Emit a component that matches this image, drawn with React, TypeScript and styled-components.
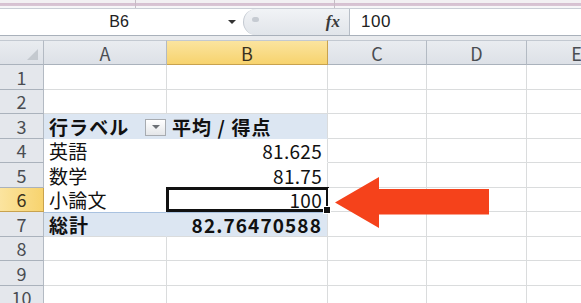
import { FC } from "react";
import styled, { createGlobalStyle, css } from "styled-components";

const CELL_FONT = `"Noto Sans CJK JP", "Noto Sans", sans-serif`;
const COLS = ["A", "B", "C", "D", "E"];
const ROWS = [1, 2, 3, 4, 5, 6, 7, 8, 9, 10];

type Cell = { text: string; bold?: boolean; right?: boolean; filter?: boolean };

// pivot table body, keyed by row number: [A, B]
const pivot: Record<number, [Cell, Cell]> = {
    3: [{ text: "行ラベル", bold: true, filter: true }, { text: "平均 / 得点", bold: true }],
    4: [{ text: "英語" }, { text: "81.625", right: true }],
    5: [{ text: "数学" }, { text: "81.75", right: true }],
    6: [{ text: "小論文" }, { text: "100", right: true }],
    7: [{ text: "総計", bold: true }, { text: "82.76470588", bold: true, right: true }],
};

const GlobalStyle = createGlobalStyle`
    html, body {
        margin: 0;
        padding: 0;
        background: #ffffff;
        overflow: hidden;
    }
`;

const App: FC = () => {
    return <Window>
        <GlobalStyle />
        <RibbonEdge>
            <RibbonGroup $w={135} />
            <RibbonGroup $w={198} />
            <RibbonGroup />
        </RibbonEdge>
        <FormulaBar>
            <NameBox>
                <NameText>B6</NameText>
                <DropArrow />
            </NameBox>
            <Splitter>
                <Knob />
                <Fx>fx</Fx>
            </Splitter>
            <FormulaInput>100</FormulaInput>
        </FormulaBar>
        <BarGap />
        <Sheet>
            <Corner>
                <CornerMark />
            </Corner>
            {COLS.map(c => <ColHead key={c} $active={c === "B"}>{c}</ColHead>)}
            {ROWS.map(r => {
                const p = pivot[r];
                const band = r === 3 || r === 7;
                return [
                    <RowHead key={`h${r}`} $active={r === 6}>{r}</RowHead>,
                    ...COLS.map((c, i) => {
                        const cell = p && i < 2 ? p[i] : undefined;
                        return <GridCell
                            key={`${c}${r}`}
                            $pivot={!!p && i < 2}
                            $band={band && i < 2}
                            $total={r === 7 && i < 2}
                            $lastPivotCol={!!p && i === 1}
                            $selected={r === 6 && c === "B"}
                            $right={cell?.right}
                        >
                            {cell && <CellText $bold={cell.bold}>{cell.text}</CellText>}
                            {cell?.filter && <FilterButton><FilterArrow /></FilterButton>}
                        </GridCell>
                    })
                ];
            })}
        </Sheet>
        <Arrow width="156" height="52" viewBox="0 0 156 52">
            <polygon points="0,25.5 44,0 44,12 154,12 154,37.5 44,37.5 44,51" fill="#f5421b" />
        </Arrow>
    </Window>
}

export default App;

const Window = styled.div`
    width: 581px;
    height: 303px;
    position: relative;
    overflow: hidden;
    display: flex;
    flex-direction: column;
    background: #ffffff;

    & > * {
        flex-shrink: 0;
    }
`;

const RibbonEdge = styled.div`
    height: 8px;
    display: flex;
    background: linear-gradient(#f2f0f3 0, #f2f0f3 3px, #d5bfd0 3px, #d9c6d5 6px, #f6f6f8 6px);
`;

const RibbonGroup = styled.div<{ $w?: number }>`
    width: ${p => p.$w ? `${p.$w}px` : "auto"};
    flex: ${p => p.$w ? "none" : 1};
    border-right: 1px solid #c7bcc6;
    &:last-child { border-right: none; }
`;

const FormulaBar = styled.div`
    box-sizing: border-box;
    height: 28px;
    display: flex;
    border-top: 1px solid #c9ced6;
    border-bottom: 1px solid #a9b1bb;
    background: #ffffff;
`;

const NameBox = styled.div`
    width: 243px;
    display: flex;
    align-items: center;
    position: relative;
`;

const NameText = styled.div`
    flex: 1;
    text-align: center;
    padding-left: 10px;
    font-family: "Liberation Sans", Arial, sans-serif;
    font-size: 16px;
    color: #222;
`;

const DropArrow = styled.div`
    width: 0;
    height: 0;
    margin-right: 7px;
    border-left: 4px solid transparent;
    border-right: 4px solid transparent;
    border-top: 4px solid #333;
`;

const Splitter = styled.div`
    width: 107px;
    display: flex;
    align-items: center;
    justify-content: space-between;
    background: linear-gradient(#f1f3f6, #e1e5ea);
    border-left: 1px solid #c3c9d1;
    border-right: 1px solid #b7bec7;
    border-radius: 13px 0 0 13px;
    box-sizing: border-box;
`;

const Knob = styled.div`
    width: 7px;
    height: 5px;
    margin-left: 8px;
    margin-top: -6px;
    border-radius: 3px;
    background: #c6cbd2;
`;

const Fx = styled.div`
    margin-right: 9px;
    font-family: "Liberation Serif", "Times New Roman", serif;
    font-style: italic;
    font-weight: bold;
    font-size: 17px;
    color: #3a3a3a;
`;

const FormulaInput = styled.div`
    flex: 1;
    display: flex;
    align-items: center;
    padding-left: 11px;
    font-family: "Liberation Sans", Arial, sans-serif;
    font-size: 17px;
    letter-spacing: 0.5px;
    color: #222;
`;

const BarGap = styled.div`
    height: 4px;
    background: #e9ebee;
`;

const Sheet = styled.div`
    display: grid;
    grid-template-columns: 44px 123px 161px 99px 100px 100px;
    grid-template-rows: 25px;
    grid-auto-rows: 24.5px;
    font-family: ${CELL_FONT};
`;

const headBase = css<{ $active?: boolean }>`
    box-sizing: border-box;
    display: flex;
    align-items: flex-end;
    justify-content: center;
    font-size: 18px;
    line-height: 1;
    color: ${p => p.$active ? "#3a3220" : "#4a4d52"};
    background: ${p => p.$active
        ? "linear-gradient(#fbe49f, #f7d36e)"
        : "linear-gradient(#e9ecf0, #dde1e7)"};
    border-right: 1px solid ${p => p.$active ? "#c8a24e" : "#b3bac3"};
    border-bottom: 1px solid ${p => p.$active ? "#c8a24e" : "#aab2bc"};
`;

const Corner = styled.div`
    ${headBase};
    border-top: 1px solid #c3c9d1;
    position: relative;
`;

const CornerMark = styled.div`
    position: absolute;
    right: 5px;
    bottom: 4px;
    width: 0;
    height: 0;
    border-left: 11px solid transparent;
    border-bottom: 11px solid #c4c9cf;
`;

const ColHead = styled.div<{ $active?: boolean }>`
    ${headBase};
    border-top: 1px solid #c3c9d1;
    padding-bottom: 2px;
`;

const RowHead = styled.div<{ $active?: boolean }>`
    ${headBase};
    background: ${p => p.$active ? "linear-gradient(90deg, #fbe49f, #f7d36e)" : "#e4e7ec"};
    padding-bottom: 3px;
`;

const GridCell = styled.div<{
    $pivot?: boolean, $band?: boolean, $total?: boolean, $lastPivotCol?: boolean,
    $selected?: boolean, $right?: boolean
}>`
    box-sizing: border-box;
    position: relative;
    display: flex;
    align-items: flex-end;
    justify-content: ${p => p.$right ? "flex-end" : "flex-start"};
    padding: 0 5px 2px 5px;
    font-size: 19px;
    line-height: 1;
    color: #111;
    white-space: nowrap;
    background: ${p => p.$band ? "#dce6f2" : "#ffffff"};
    border-right: 1px solid ${p => p.$pivot && !p.$lastPivotCol ? "transparent" : "#dadcdd"};
    border-bottom: 1px solid ${p => p.$pivot && !p.$total ? "transparent" : "#dadcdd"};
    ${p => p.$total && css`border-top: 1px solid #a9c2e0;`}

    ${p => p.$selected && css`
        &::after {
            content: "";
            position: absolute;
            left: -1px;
            top: -1px;
            right: -2px;
            bottom: -1px;
            border: 3px solid #111;
        }
        &::before {
            content: "";
            position: absolute;
            right: -4px;
            bottom: -3px;
            width: 6px;
            height: 6px;
            background: #111;
            border: 1px solid #fff;
            z-index: 1;
        }
    `}
`;

const CellText = styled.span<{ $bold?: boolean }>`
    font-weight: ${p => p.$bold ? 700 : 400};
    letter-spacing: ${p => p.$bold ? "1.1px" : "0.3px"};
`;

const FilterButton = styled.div`
    box-sizing: border-box;
    width: 21px;
    height: 17px;
    margin-left: auto;
    margin-right: -5px;
    display: flex;
    align-items: center;
    justify-content: center;
    background: linear-gradient(#ffffff, #e4e6e9);
    border: 1px solid #a7abb0;
`;

const FilterArrow = styled.div`
    width: 0;
    height: 0;
    border-left: 4px solid transparent;
    border-right: 4px solid transparent;
    border-top: 4px solid #6b6f75;
`;

const Arrow = styled.svg`
    position: absolute;
    left: 335px;
    top: 177px;
`;
